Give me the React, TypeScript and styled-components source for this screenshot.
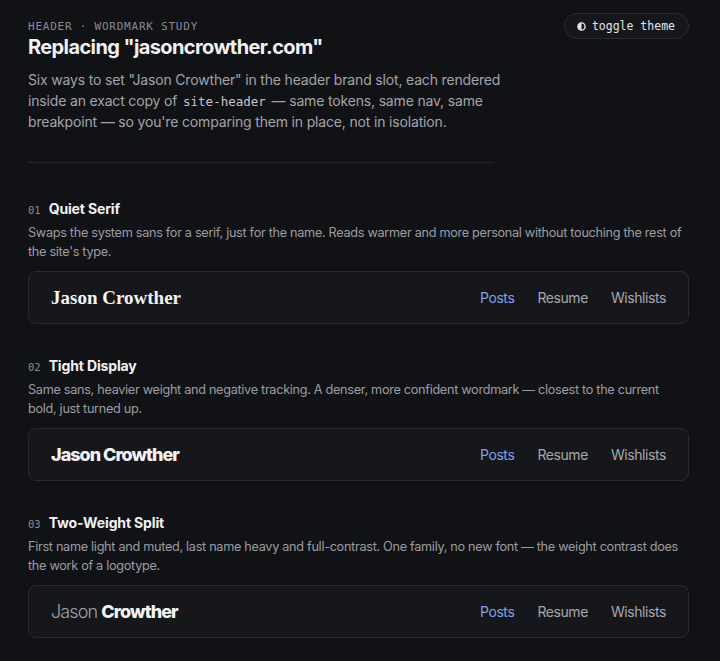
import React from 'react';
import styled, { createGlobalStyle } from 'styled-components';

const GlobalStyle = createGlobalStyle`
  html, body {
    margin: 0;
    padding: 0;
    background: #111216;
  }
  body {
    font-family: Inter, 'Noto Sans', sans-serif;
    color: #ececee;
  }
`;

const Page = styled.main`
  padding: 19px 31px 40px 28px;
`;

const Top = styled.header`
  display: flex;
  justify-content: space-between;
  align-items: flex-start;
`;

const Intro = styled.div`
  width: 480px;
`;

const Eyebrow = styled.div`
  font-family: 'DejaVu Sans Mono', 'Liberation Mono', monospace;
  font-size: 11px;
  letter-spacing: 0.07em;
  color: #8a8b91;
  line-height: 16px;
`;

const Title = styled.h1`
  margin: -1px 0 0;
  font-size: 20px;
  font-weight: 700;
  letter-spacing: -0.03em;
  line-height: 26px;
  color: #f1f1f3;
`;

const Lede = styled.p`
  margin: 9px 0 0;
  font-size: 14px;
  line-height: 21px;
  letter-spacing: -0.012em;
  color: #a3a4a9;
`;

const Code = styled.code`
  font-family: 'DejaVu Sans Mono', 'Liberation Mono', monospace;
  font-size: 12.5px;
  line-height: 1;
  letter-spacing: 0;
  margin: 0 2px;
  color: #c4c5ca;
`;

const ToggleButton = styled.button`
  display: flex;
  align-items: center;
  gap: 6px;
  height: 26px;
  padding: 0 13px 0 12px;
  margin-top: -6px;
  border: 1px solid #2a2b30;
  border-radius: 13px;
  background: #16171b;
  color: #e4e4e7;
  font-family: 'DejaVu Sans Mono', 'Liberation Mono', monospace;
  font-size: 11.5px;
  cursor: pointer;
`;

const Rule = styled.hr`
  margin: 30px 0 0;
  width: 466px;
  border: 0;
  border-top: 1px solid #26272c;
`;

const Sections = styled.div`
  display: flex;
  flex-direction: column;
  gap: 32px;
  margin-top: 36px;
`;

const Section = styled.section`
  display: flex;
  flex-direction: column;
`;

const SectionHead = styled.div`
  display: flex;
  align-items: baseline;
  gap: 8px;
  line-height: 20px;
`;

const Num = styled.span`
  font-family: 'DejaVu Sans Mono', 'Liberation Mono', monospace;
  font-size: 10.5px;
  color: #8a8b91;
`;

const SectionTitle = styled.h2`
  margin: 0;
  font-size: 14px;
  font-weight: 700;
  letter-spacing: -0.01em;
  color: #f1f1f3;
`;

const Desc = styled.p`
  margin: 3px 0 0;
  font-size: 12.7px;
  line-height: 19px;
  letter-spacing: -0.024em;
  color: #9c9da2;
`;

const Card = styled.div`
  display: flex;
  align-items: center;
  justify-content: space-between;
  height: 51px;
  margin-top: 10px;
  padding: 0 22px;
  border: 1px solid #2a2b30;
  border-radius: 8px;
  background: #16171b;
`;

const Brand = styled.div<{ $variant: 'serif' | 'tight' | 'split' }>`
  color: #f3f3f5;
  white-space: nowrap;
  ${({ $variant }) =>
    $variant === 'serif'
      ? `font-family: 'Liberation Serif', 'Times New Roman', serif; font-weight: 700; font-size: 19px;`
      : $variant === 'tight'
      ? `font-family: Inter, sans-serif; font-weight: 800; font-size: 18px; letter-spacing: -0.055em;`
      : `font-family: Inter, sans-serif; font-size: 18px; letter-spacing: -0.05em;`}
`;

const Light = styled.span`
  font-weight: 300;
  color: #a3a4a9;
`;

const Heavy = styled.span`
  font-weight: 800;
  color: #f3f3f5;
`;

const Nav = styled.nav`
  display: flex;
  gap: 23px;
`;

const NavLink = styled.a<{ $active?: boolean }>`
  font-size: 14px;
  letter-spacing: -0.03em;
  color: ${({ $active }) => ($active ? '#7fa2ea' : '#a6a7ac')};
  text-decoration: none;
`;

const HalfCircle = () => (
  <svg width="9" height="9" viewBox="0 0 10 10">
    <circle cx="5" cy="5" r="4" fill="none" stroke="#e4e4e7" strokeWidth="1.6" />
    <path d="M5 1 A4 4 0 0 0 5 9 Z" fill="#e4e4e7" />
  </svg>
);

const studies = [
  {
    n: '01',
    title: 'Quiet Serif',
    desc: "Swaps the system sans for a serif, just for the name. Reads warmer and more personal without touching the rest of the site's type.",
    variant: 'serif' as const,
  },
  {
    n: '02',
    title: 'Tight Display',
    desc: 'Same sans, heavier weight and negative tracking. A denser, more confident wordmark — closest to the current bold, just turned up.',
    variant: 'tight' as const,
  },
  {
    n: '03',
    title: 'Two-Weight Split',
    desc: 'First name light and muted, last name heavy and full-contrast. One family, no new font — the weight contrast does the work of a logotype.',
    variant: 'split' as const,
  },
];

export default function App() {
  return (
    <>
      <GlobalStyle />
      <Page>
        <Top>
          <Intro>
            <Eyebrow>HEADER · WORDMARK STUDY</Eyebrow>
            <Title>Replacing "jasoncrowther.com"</Title>
            <Lede>
              Six ways to set "Jason Crowther" in the header brand slot, each rendered inside an exact copy
              of <Code>site-header</Code> — same tokens, same nav, same breakpoint — so you're comparing them
              in place, not in isolation.
            </Lede>
          </Intro>
          <ToggleButton>
            <HalfCircle />
            toggle theme
          </ToggleButton>
        </Top>
        <Rule />
        <Sections>
          {studies.map((s) => (
            <Section key={s.n}>
              <SectionHead>
                <Num>{s.n}</Num>
                <SectionTitle>{s.title}</SectionTitle>
              </SectionHead>
              <Desc>{s.desc}</Desc>
              <Card>
                <Brand $variant={s.variant}>
                  {s.variant === 'split' ? (
                    <>
                      <Light>Jason</Light> <Heavy>Crowther</Heavy>
                    </>
                  ) : (
                    'Jason Crowther'
                  )}
                </Brand>
                <Nav>
                  <NavLink $active>Posts</NavLink>
                  <NavLink>Resume</NavLink>
                  <NavLink>Wishlists</NavLink>
                </Nav>
              </Card>
            </Section>
          ))}
        </Sections>
      </Page>
    </>
  );
}
